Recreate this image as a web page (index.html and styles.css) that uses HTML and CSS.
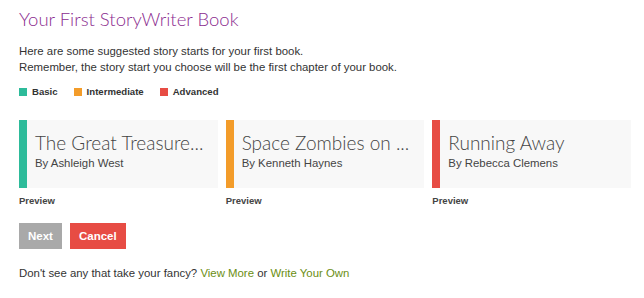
FILE: index.html
```html
<!DOCTYPE html>
<html lang="en">
<head>
    <meta charset="UTF-8">
    <meta name="viewport" content="width=device-width, initial-scale=1.0">
    <title>Your First StoryWriter Book</title>
    <link rel="stylesheet" href="styles.css">
</head>
<body>
    <div class="container">
        <h1>Your First StoryWriter Book</h1>

        <p class="intro">
            Here are some suggested story starts for your first book.<br>
            Remember, the story start you choose will be the first chapter of your book.
        </p>

        <!-- Difficulty legend -->
        <div class="legend">
            <span class="legend-item"><span class="swatch basic"></span>Basic</span>
            <span class="legend-item"><span class="swatch intermediate"></span>Intermediate</span>
            <span class="legend-item"><span class="swatch advanced"></span>Advanced</span>
        </div>

        <div class="stories">
            <div class="story">
                <div class="story-card basic">
                    <div class="story-title">The Great Treasure...</div>
                    <div class="story-author">By Ashleigh West</div>
                </div>
                <a class="preview" href="#">Preview</a>
            </div>
            <div class="story">
                <div class="story-card intermediate">
                    <div class="story-title">Space Zombies on ...</div>
                    <div class="story-author">By Kenneth Haynes</div>
                </div>
                <a class="preview" href="#">Preview</a>
            </div>
            <div class="story">
                <div class="story-card advanced">
                    <div class="story-title">Running Away</div>
                    <div class="story-author">By Rebecca Clemens</div>
                </div>
                <a class="preview" href="#">Preview</a>
            </div>
        </div>

        <div class="actions">
            <button class="btn btn-next">Next</button>
            <button class="btn btn-cancel">Cancel</button>
        </div>

        <p class="more">Don't see any that take your fancy? <a href="#">View More</a> or <a href="#">Write Your Own</a></p>
    </div>
</body>
</html>
```

FILE: styles.css
```css
body {
    margin: 0;
    font-family: "Liberation Sans", Arial, sans-serif;
    color: #333;
    background: #fff;
}
.container {
    width: 612px;
    padding: 7px 0 0 19px;
}
h1 {
    margin: 0;
    font-family: Lato, sans-serif;
    font-weight: 300;
    font-size: 18.5px;
    line-height: 24px;
    color: #8b2c8f;
}
.intro {
    margin: 12px 0 0;
    font-size: 11.4px;
    line-height: 16px;
}
.legend {
    display: flex;
    gap: 16px;
    margin-top: 11px;
    font-size: 9.6px;
    font-weight: bold;
    line-height: 12px;
}
.legend-item {
    display: flex;
    align-items: center;
}
.swatch {
    width: 8px;
    height: 8px;
    margin-right: 5px;
}
.swatch.basic { background: #2dbb9a; }
.swatch.intermediate { background: #f39c2a; }
.swatch.advanced { background: #e74c44; }

.stories {
    display: grid;
    grid-template-columns: repeat(3, minmax(0, 1fr));
    gap: 8px;
    margin-top: 22px;
}
.story-card {
    height: 68px;
    box-sizing: border-box;
    padding: 13px 8px 0 8px;
    background: #f8f8f8;
    border-left: 8px solid #ccc;
}
.story-card.basic { border-left-color: #2dbb9a; }
.story-card.intermediate { border-left-color: #f39c2a; }
.story-card.advanced { border-left-color: #e74c44; }
.story-title {
    font-family: Lato, sans-serif;
    font-weight: 300;
    font-size: 19px;
    line-height: 20px;
    color: #444;
    white-space: nowrap;
}
.story-author {
    margin-top: 2px;
    font-size: 11.4px;
    line-height: 16px;
    color: #444;
}
.preview {
    display: block;
    margin-top: 7px;
    font-size: 9.5px;
    font-weight: bold;
    line-height: 12px;
    color: #444;
    text-decoration: none;
}
.actions {
    display: flex;
    gap: 8px;
    margin-top: 16px;
}
.btn {
    height: 26px;
    padding: 0 9px;
    border: none;
    font-family: "Liberation Sans", Arial, sans-serif;
    font-size: 11.5px;
    font-weight: bold;
    color: #fff;
    cursor: pointer;
}
.btn-next { background: #a9a9a9; }
.btn-cancel { background: #e74c44; }
.more {
    margin: 16px 0 0;
    font-size: 11.4px;
    line-height: 16px;
}
.more a {
    color: #6b8e12;
    text-decoration: none;
}
```
